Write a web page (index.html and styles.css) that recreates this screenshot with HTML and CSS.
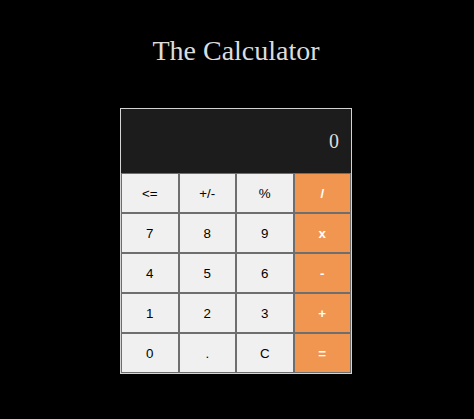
FILE: index.html
```html
<!DOCTYPE html>
<html>
<head>
<meta charset="utf-8">
<title>The Calculator</title>
<link rel="stylesheet" href="styles.css">
</head>
<body>
<h1 class="title">The Calculator</h1>
<div class="calc">
  <div class="display"><span class="value">0</span></div>
  <div class="keys">
    <button class="key">&lt;=</button>
    <button class="key">+/-</button>
    <button class="key">%</button>
    <button class="key op">/</button>
    <button class="key">7</button>
    <button class="key">8</button>
    <button class="key">9</button>
    <button class="key op">x</button>
    <button class="key">4</button>
    <button class="key">5</button>
    <button class="key">6</button>
    <button class="key op">-</button>
    <button class="key">1</button>
    <button class="key">2</button>
    <button class="key">3</button>
    <button class="key op">+</button>
    <button class="key">0</button>
    <button class="key">.</button>
    <button class="key">C</button>
    <button class="key op">=</button>
  </div>
</div>
</body>
</html>
```
FILE: styles.css
```css
html, body {
  background: #000;
}
body {
  margin: 0;
  padding: 0 2px 0 0;
  display: flex;
  flex-direction: column;
  align-items: center;
}
.title {
  margin: 35px 0 42px;
  font-family: "Liberation Serif", "Times New Roman", serif;
  font-size: 28px;
  font-weight: normal;
  line-height: 31px;
  color: #dcdcdc;
}
.calc {
  width: 230px;
  border: 1px solid #d4d4d4;
  background: #1c1c1c;
}
.display {
  height: 64px;
  display: flex;
  align-items: center;
  justify-content: flex-end;
  padding-right: 12px;
  background: #1c1c1c;
}
.value {
  font-family: "Liberation Serif", "Times New Roman", serif;
  font-size: 20px;
  color: #dcdcdc;
}
.keys {
  display: grid;
  grid-template-columns: repeat(4, 1fr);
}
.key {
  box-sizing: border-box;
  height: 40px;
  margin: 0;
  padding: 0;
  border: 1px solid #6e6e6e;
  background: #f0f0f0;
  color: #000;
  font-family: "Liberation Sans", Arial, sans-serif;
  font-size: 13.333px;
}
.key.op {
  background: #f09650;
  color: #fff;
  font-weight: bold;
}
```
